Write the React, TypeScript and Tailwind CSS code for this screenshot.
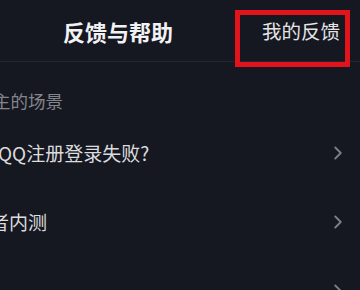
import { ChevronRight } from "lucide-react";

const font = { fontFamily: '"Noto Sans CJK SC", "Noto Sans", sans-serif' };

const rows = [
  { text: "QQ注册登录失败?", shift: "-ml-[2px]" },
  { text: "者内测", shift: "-ml-[10px]" },
  { text: "", shift: "" },
];

export default function App() {
  return (
    <div className="w-[360px] h-[290px] overflow-hidden bg-[#161821] relative" style={font}>
      <div className="h-[62px] flex items-center border-b border-[#23262f]">
        <span className="ml-[63px] text-[22px] font-bold text-[#f2f2f4] leading-none pt-[1px]">反馈与帮助</span>
        <span className="ml-auto mr-[20px] text-[19.5px] text-[#e4e4e6] leading-none pt-[1px]">我的反馈</span>
      </div>
      {/* red annotation box */}
      <div className="absolute left-[235px] top-[10px] w-[115px] h-[57px] border-[5px] border-[#e3131b]" />

      <div className="h-[56px] flex items-end pb-[9px]">
        <span className="-ml-[7px] text-[17.5px] text-[#84858c] leading-none">主的场景</span>
      </div>

      {rows.map((r, i) => (
        <div key={i} className="h-[69px] flex items-center justify-between">
          <span className={`${r.shift} text-[19px] text-[#dcdcdf] leading-none`}>{r.text}</span>
          <ChevronRight size={22} strokeWidth={2} className="mr-[11px] text-[#7e7f86]" />
        </div>
      ))}
    </div>
  );
}
